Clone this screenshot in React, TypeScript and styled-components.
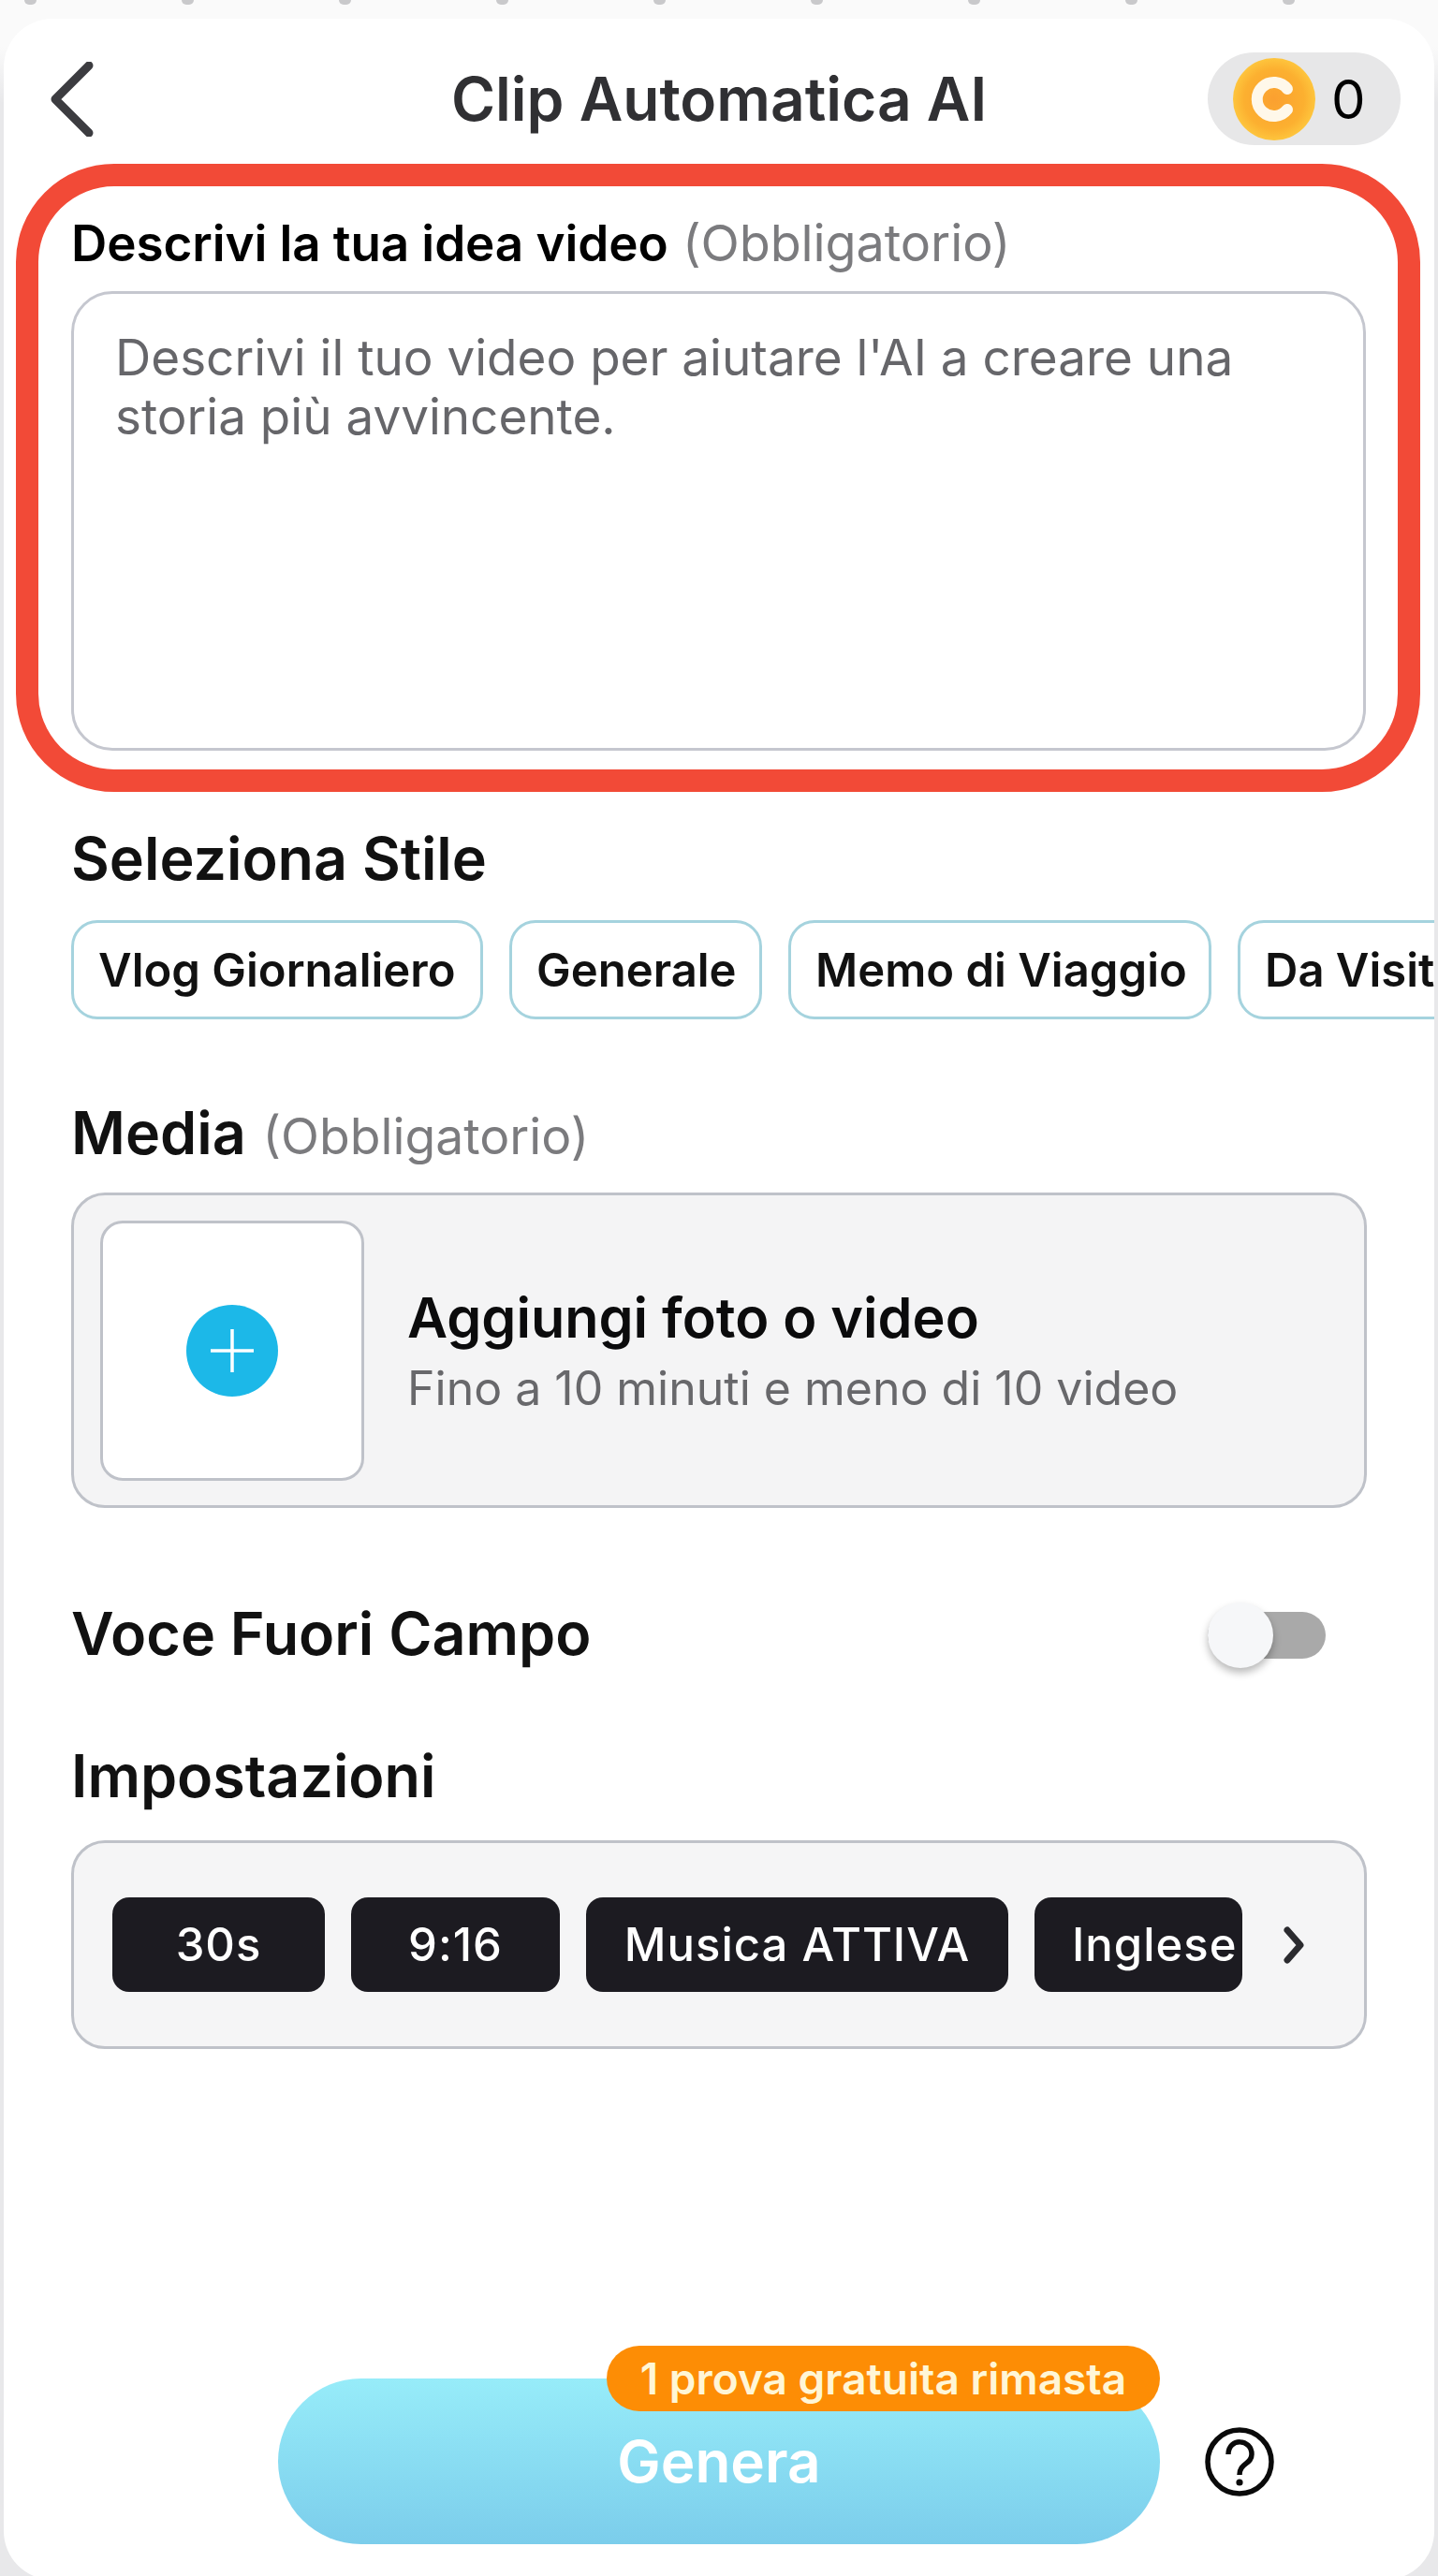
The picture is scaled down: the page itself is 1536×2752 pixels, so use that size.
import React from 'react'
import styled, { createGlobalStyle } from 'styled-components'

const GlobalStyle = createGlobalStyle`
  html, body {
    margin: 0;
    padding: 0;
    background: #e8e8ea;
  }
  * {
    box-sizing: border-box;
  }
`

const FONT = `Inter, "Liberation Sans", sans-serif`

const styles = [
  { label: 'Vlog Giornaliero', width: 440 },
  { label: 'Generale', width: 270 },
  { label: 'Memo di Viaggio', width: 452 },
  { label: 'Da Visitare', width: 320 },
]

const settings = [
  { label: '30s', width: 227 },
  { label: '9:16', width: 223 },
  { label: 'Musica ATTIVA', width: 451 },
  { label: 'Inglese', width: 222, clipped: true },
]

export default function App() {
  return (
    <>
      <GlobalStyle />
      <Page>
        <Ticks>
          {Array.from({ length: 9 }).map((_, i) => (
            <Tick key={i} />
          ))}
        </Ticks>
        <Card>
          <Header>
            <BackIcon viewBox='0 0 48 80' aria-hidden>
              <path d='M42 4 L6 40 L42 76' />
            </BackIcon>
            <Title>Clip Automatica AI</Title>
            <Credits>
              <Coin>
                <svg viewBox='0 0 88 88' width='88' height='88' aria-hidden>
                  <defs>
                    <radialGradient id='coinFill' cx='50%' cy='50%' r='52%'>
                      <stop offset='0%' stopColor='#fba030' />
                      <stop offset='70%' stopColor='#fcb030' />
                      <stop offset='100%' stopColor='#fec83f' />
                    </radialGradient>
                  </defs>
                  <circle cx='44' cy='44' r='44' fill='url(#coinFill)' />
                  <path
                    d='M58 33 A18 18 0 1 0 58 55'
                    fill='none'
                    stroke='#fff8ea'
                    strokeWidth='12'
                    strokeLinecap='round'
                  />
                </svg>
              </Coin>
              <CreditCount>0</CreditCount>
            </Credits>
          </Header>

          <IdeaFrame>
            <IdeaLabel>
              Descrivi la tua idea video <Hint>(Obbligatorio)</Hint>
            </IdeaLabel>
            <IdeaBox>
              Descrivi il tuo video per aiutare l'AI a creare una
              <br />
              storia più avvincente.
            </IdeaBox>
          </IdeaFrame>

          <StyleHeading>Seleziona Stile</StyleHeading>
          <ChipRow>
            {styles.map((s) => (
              <Chip key={s.label} $width={s.width}>
                {s.label}
              </Chip>
            ))}
          </ChipRow>

          <MediaHeading>
            Media <MediaHint>(Obbligatorio)</MediaHint>
          </MediaHeading>
          <MediaBox>
            <AddTile>
              <PlusIcon viewBox='0 0 98 98' aria-hidden>
                <circle cx='49' cy='49' r='49' fill='#1cb8e8' />
                <path d='M49 26 V72 M26 49 H72' stroke='#fff' strokeWidth='3.5' />
              </PlusIcon>
            </AddTile>
            <div>
              <MediaTitle>Aggiungi foto o video</MediaTitle>
              <MediaSub>Fino a 10 minuti e meno di 10 video</MediaSub>
            </div>
          </MediaBox>

          <VoiceRow>
            <RowHeading>Voce Fuori Campo</RowHeading>
            <Toggle>
              <Thumb />
            </Toggle>
          </VoiceRow>

          <SettingsHeading>Impostazioni</SettingsHeading>
          <SettingsBox>
            {settings.map((s) => (
              <SettingPill key={s.label} $width={s.width} $clipped={s.clipped}>
                {s.label}
              </SettingPill>
            ))}
            <MoreIcon viewBox='0 0 24 40' aria-hidden>
              <path d='M5 4 L19 20 L5 36' />
            </MoreIcon>
          </SettingsBox>

          <Footer>
            <GenerateButton>
              <TrialBadge>1 prova gratuita rimasta</TrialBadge>
              Genera
            </GenerateButton>
            <HelpIcon viewBox='0 0 74 74' aria-hidden>
              <circle cx='37' cy='37' r='34' />
              <path d='M25 29 C25 11 50 12 50 29 C50 40 37 38 37 51' />
              <circle className='dot' cx='37' cy='59' r='3.6' />
            </HelpIcon>
          </Footer>
        </Card>
      </Page>
    </>
  )
}

const Page = styled.div`
  position: relative;
  width: 1536px;
  height: 2752px;
  overflow: hidden;
  font-family: ${FONT};
  background: linear-gradient(180deg, #fafafa 0, #fafafa 50px, #e8e8ea 110px);
`

const Ticks = styled.div`
  display: flex;
  gap: 155px;
  height: 5px;
  padding-left: 26px;
`

const Tick = styled.span`
  width: 13px;
  height: 5px;
  background: #c9c9cb;
  border-radius: 0 0 7px 7px;
`

const Card = styled.main`
  margin: 15px 4px 0;
  height: 2736px;
  padding-top: 36px;
  background: #fff;
  border-radius: 52px;
`

const Header = styled.header`
  display: flex;
  align-items: center;
  height: 99px;
  padding: 0 36px 0 49px;
  position: relative;
`

const BackIcon = styled.svg`
  width: 48px;
  height: 80px;
  fill: none;
  stroke: #3c3c40;
  stroke-width: 9;
  stroke-linecap: round;
  stroke-linejoin: round;
`

const Title = styled.h1`
  position: absolute;
  left: 0;
  right: 0;
  margin: 0;
  text-align: center;
  font-size: 64px;
  font-weight: 600;
  color: #303033;
`

const Credits = styled.div`
  display: flex;
  align-items: center;
  margin-left: auto;
  width: 206px;
  height: 99px;
  padding-left: 27px;
  gap: 17px;
  background: #e7e7e8;
  border-radius: 50px;
`

const Coin = styled.div`
  display: flex;
  width: 88px;
  height: 88px;
`

const CreditCount = styled.span`
  font-size: 58px;
  color: #000;
`

const IdeaFrame = styled.section`
  margin: 20px 15px 0 13px;
  height: 671px;
  padding: 31px 34px 0 35px;
  border: 24px solid #f24a37;
  border-radius: 105px;
`

const IdeaLabel = styled.div`
  font-size: 53px;
  line-height: 60px;
  font-weight: 600;
  color: #000;
  letter-spacing: -0.1px;
  white-space: nowrap;
`

const Hint = styled.span`
  margin-left: 2px;
  font-size: 54px;
  font-weight: 400;
  color: #7b7b7e;
`

const IdeaBox = styled.div`
  height: 491px;
  margin-top: 21px;
  padding: 37px 44px 0;
  border: 3px solid #c5c7cf;
  border-radius: 44px;
  font-size: 53px;
  line-height: 63px;
  color: #66666a;
  white-space: nowrap;
`

const StyleHeading = styled.h2`
  margin: 35px 0 0 72px;
  font-size: 62.8px;
  line-height: 72px;
  font-weight: 600;
  color: #111;
`

const ChipRow = styled.div`
  display: flex;
  gap: 28px;
  margin-top: 30px;
  padding-left: 72px;
  overflow: hidden;
`

const Chip = styled.div<{ $width: number }>`
  flex: none;
  display: flex;
  align-items: center;
  width: ${(p) => p.$width}px;
  height: 106px;
  padding-left: 26px;
  border: 3px solid #a5d3de;
  border-radius: 28px;
  font-size: 49px;
  font-weight: 600;
  color: #111;
  white-space: nowrap;
  overflow: hidden;
`

const MediaHeading = styled.h2`
  margin: 85px 0 0 72px;
  font-size: 62.8px;
  line-height: 72px;
  font-weight: 600;
  color: #111;
`

const MediaHint = styled.span`
  margin-left: 2px;
  font-size: 53.5px;
  font-weight: 400;
  color: #7b7b7e;
`

const MediaBox = styled.div`
  display: flex;
  align-items: center;
  gap: 46px;
  width: 1384px;
  height: 337px;
  margin: 24px 0 0 72px;
  padding-left: 28px;
  background: #f4f4f5;
  border: 3px solid #bfc2c9;
  border-radius: 36px;
`

const AddTile = styled.div`
  display: flex;
  align-items: center;
  justify-content: center;
  width: 282px;
  height: 278px;
  background: #fff;
  border: 3px solid #bfc2c9;
  border-radius: 24px;
`

const PlusIcon = styled.svg`
  width: 98px;
  height: 98px;
`

const MediaTitle = styled.div`
  font-size: 59.3px;
  line-height: 68px;
  font-weight: 600;
  color: #0b0b0c;
`

const MediaSub = styled.div`
  margin-top: 13px;
  font-size: 50px;
  line-height: 56px;
  color: #68686b;
`

const VoiceRow = styled.div`
  display: flex;
  align-items: center;
  justify-content: space-between;
  height: 72px;
  margin: 98px 116px 0 72px;
`

const RowHeading = styled.h2`
  margin: 0;
  font-size: 62.8px;
  line-height: 72px;
  font-weight: 600;
  color: #111;
`

const Toggle = styled.div`
  position: relative;
  top: 2px;
  width: 126px;
  height: 50px;
  background: #a9a9a9;
  border-radius: 25px;
`

const Thumb = styled.span`
  position: absolute;
  left: 0;
  top: -10px;
  width: 70px;
  height: 70px;
  background: #f6f7f9;
  border-radius: 50%;
  box-shadow: 0 5px 9px rgba(0, 0, 0, 0.28);
`

const SettingsHeading = styled.h2`
  margin: 80px 0 0 72px;
  font-size: 62.8px;
  line-height: 72px;
  font-weight: 600;
  color: #111;
`

const SettingsBox = styled.div`
  display: flex;
  align-items: center;
  gap: 28px;
  width: 1384px;
  height: 223px;
  margin-top: 33px;
  margin-left: 72px;
  padding-left: 41px;
  background: #f5f5f6;
  border: 3px solid #bfc2c9;
  border-radius: 36px;
`

const SettingPill = styled.div<{ $width: number; $clipped?: boolean }>`
  flex: none;
  display: flex;
  align-items: center;
  justify-content: ${(p) => (p.$clipped ? 'flex-start' : 'center')};
  width: ${(p) => p.$width}px;
  height: 101px;
  padding-left: ${(p) => (p.$clipped ? '40px' : '0')};
  background: #1c1b21;
  border-radius: 18px;
  font-size: 49px;
  font-weight: 500;
  letter-spacing: 1px;
  color: #fff;
  white-space: nowrap;
  overflow: hidden;
`

const MoreIcon = styled.svg`
  width: 24px;
  height: 40px;
  margin-left: 15px;
  fill: none;
  stroke: #2b2b2f;
  stroke-width: 7;
  stroke-linecap: round;
  stroke-linejoin: round;
`

const Footer = styled.div`
  display: flex;
  align-items: center;
  gap: 48px;
  margin: 352px 0 0 293px;
`

const GenerateButton = styled.div`
  position: relative;
  display: flex;
  align-items: center;
  justify-content: center;
  width: 942px;
  height: 177px;
  background: linear-gradient(180deg, #97ecf9 0%, #7bcdeb 100%);
  border-radius: 89px;
  font-size: 62px;
  font-weight: 600;
  color: #fff;
`

const TrialBadge = styled.span`
  position: absolute;
  top: -35px;
  right: 0;
  display: flex;
  align-items: center;
  justify-content: center;
  width: 591px;
  height: 70px;
  background: #fd8d05;
  border-radius: 35px;
  font-size: 46px;
  font-weight: 600;
  color: #fff6d6;
`

const HelpIcon = styled.svg`
  width: 74px;
  height: 74px;
  fill: none;
  stroke: #0a0a0a;
  stroke-width: 5.5;

  .dot {
    fill: #0a0a0a;
    stroke: none;
  }
`
